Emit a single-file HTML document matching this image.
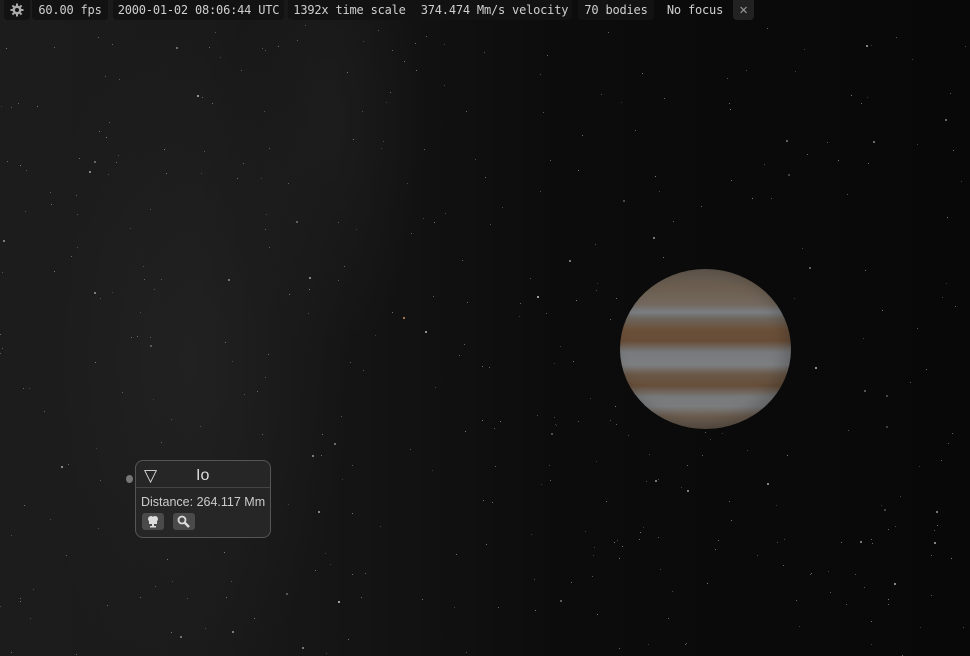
<!DOCTYPE html>
<html><head><meta charset="utf-8"><style>
html,body{margin:0;padding:0;width:970px;height:656px;overflow:hidden;background:#0a0a0a;}
body{position:relative;font-family:"DejaVu Sans Mono","Liberation Mono",monospace;}
#bg{position:absolute;inset:0;background:
radial-gradient(ellipse 200px 420px at 190px 360px,rgba(40,40,40,.5),rgba(0,0,0,0) 80%),
radial-gradient(ellipse 120px 300px at 330px 120px,rgba(36,36,36,.5),rgba(0,0,0,0) 80%),
linear-gradient(90deg,#1c1c1c 0px,#1a1a1a 200px,#131313 380px,#0c0c0c 560px,#080808 970px);}
.s{position:absolute;width:2px;height:2px;background:#ccc;border-radius:1px;}
.t{position:absolute;width:1px;height:1px;background:#888;}
.bar{position:absolute;top:0;height:20px;background:#121212;color:#cfcfcf;font-size:12px;line-height:20px;border-radius:0 0 4px 4px;white-space:nowrap;letter-spacing:-0.2px;}
#jup{position:absolute;left:620px;top:269px;width:171px;height:160px;border-radius:50%;
background:linear-gradient(180deg,#5e554b 0%,#6c5f51 12%,#73685d 22%,#7a7e83 27%,#6d655c 31%,#6b5039 38%,#674d37 45%,#777a7d 52%,#7c7e80 60%,#6a5847 66%,#664e3a 73%,#787a7b 80%,#7b7c7d 86%,#6c5e50 92%,#5e5247 100%);
box-shadow:inset -6px -4px 14px rgba(0,0,0,.2);}
#panel{position:absolute;left:135px;top:460px;width:134px;height:76px;background:#262626;border:1px solid #555;border-radius:8px;font-family:"Liberation Sans","DejaVu Sans",sans-serif;color:#ddd;}
.btn{position:absolute;top:52px;width:22px;height:17px;background:#4a4a4a;border-radius:3px;}
</style></head><body>
<div id="bg"></div>
<div id="stars"></div>
<div id="jup"></div>
<div class="bar" style="left:4px;width:26px;text-align:center;">
<svg width="14" height="14" viewBox="0 0 14 14" style="margin-top:3px"><g fill="#aaa"><circle cx="7" cy="7" r="4.5"/><rect x="6" y="0.5" width="2" height="13"/><rect x="0.5" y="6" width="13" height="2"/><rect x="6" y="0.5" width="2" height="13" transform="rotate(45 7 7)"/><rect x="6" y="0.5" width="2" height="13" transform="rotate(-45 7 7)"/></g><circle cx="7" cy="7" r="2" fill="#121212"/></svg></div>
<div class="bar" style="left:32px;width:76px;text-align:center;">60.00 fps</div>
<div class="bar" style="left:113px;width:171px;text-align:center;">2000-01-02 08:06:44 UTC</div>
<div class="bar" style="left:288px;width:123px;text-align:center;">1392x time scale</div>
<div class="bar" style="left:417px;width:155px;text-align:center;">374.474 Mm/s velocity</div>
<div class="bar" style="left:578px;width:76px;text-align:center;">70 bodies</div>
<div class="bar" style="left:660px;width:70px;text-align:center;background:transparent">No focus</div>
<div class="bar" style="left:733px;width:21px;text-align:center;background:#222;color:#999;font-weight:bold;font-size:14px;">✕</div>
<div style="position:absolute;left:126px;top:475px;width:7px;height:8px;border-radius:50%;background:#777;"></div>
<div id="panel">
<div style="position:absolute;left:8px;top:5px;font-size:17px;line-height:20px;font-family:'DejaVu Sans',sans-serif;">▽</div>
<div style="position:absolute;left:60px;top:5px;font-size:16px;line-height:20px;">Io</div>
<div style="position:absolute;left:0;right:0;top:26px;border-top:1px solid #444;"></div>
<div style="position:absolute;left:5px;top:34px;font-size:12.5px;color:#ccc;white-space:nowrap;">Distance: 264.117 Mm</div>
<div class="btn" style="left:6px;"><svg width="22" height="17" viewBox="0 0 22 17"><g fill="#ddd"><circle cx="9" cy="6" r="3"/><circle cx="13" cy="6" r="3"/><rect x="7" y="7" width="8" height="4"/><rect x="10" y="11" width="2" height="3"/><rect x="8" y="13" width="6" height="1.5"/></g></svg></div>
<div class="btn" style="left:37px;"><svg width="22" height="17" viewBox="0 0 22 17"><circle cx="9" cy="7" r="3.5" fill="none" stroke="#ddd" stroke-width="1.8"/><path d="M11.5 9.5 L16 14" stroke="#ddd" stroke-width="2.5"/></svg></div>
</div>
<script>
var s=document.getElementById('stars'),h='',r=7;function R(){r=(r*16807)%2147483647;return r/2147483647;}
for(var i=0;i<420;i++){var x=R()*970,y=22+R()*634,b=R();if(x>618&&x<793&&y>267&&y<431)continue;
h+='<div class="'+(b>0.88?'s':'t')+'" style="left:'+x.toFixed(0)+'px;top:'+y.toFixed(0)+'px;opacity:'+(0.35+R()*0.55).toFixed(2)+'"></div>';}
h+='<div class="s" style="left:537px;top:296px"></div><div class="s" style="left:403px;top:317px;background:#c96"></div><div class="s" style="left:338px;top:601px"></div>';
s.innerHTML=h;
</script>
</body></html>
